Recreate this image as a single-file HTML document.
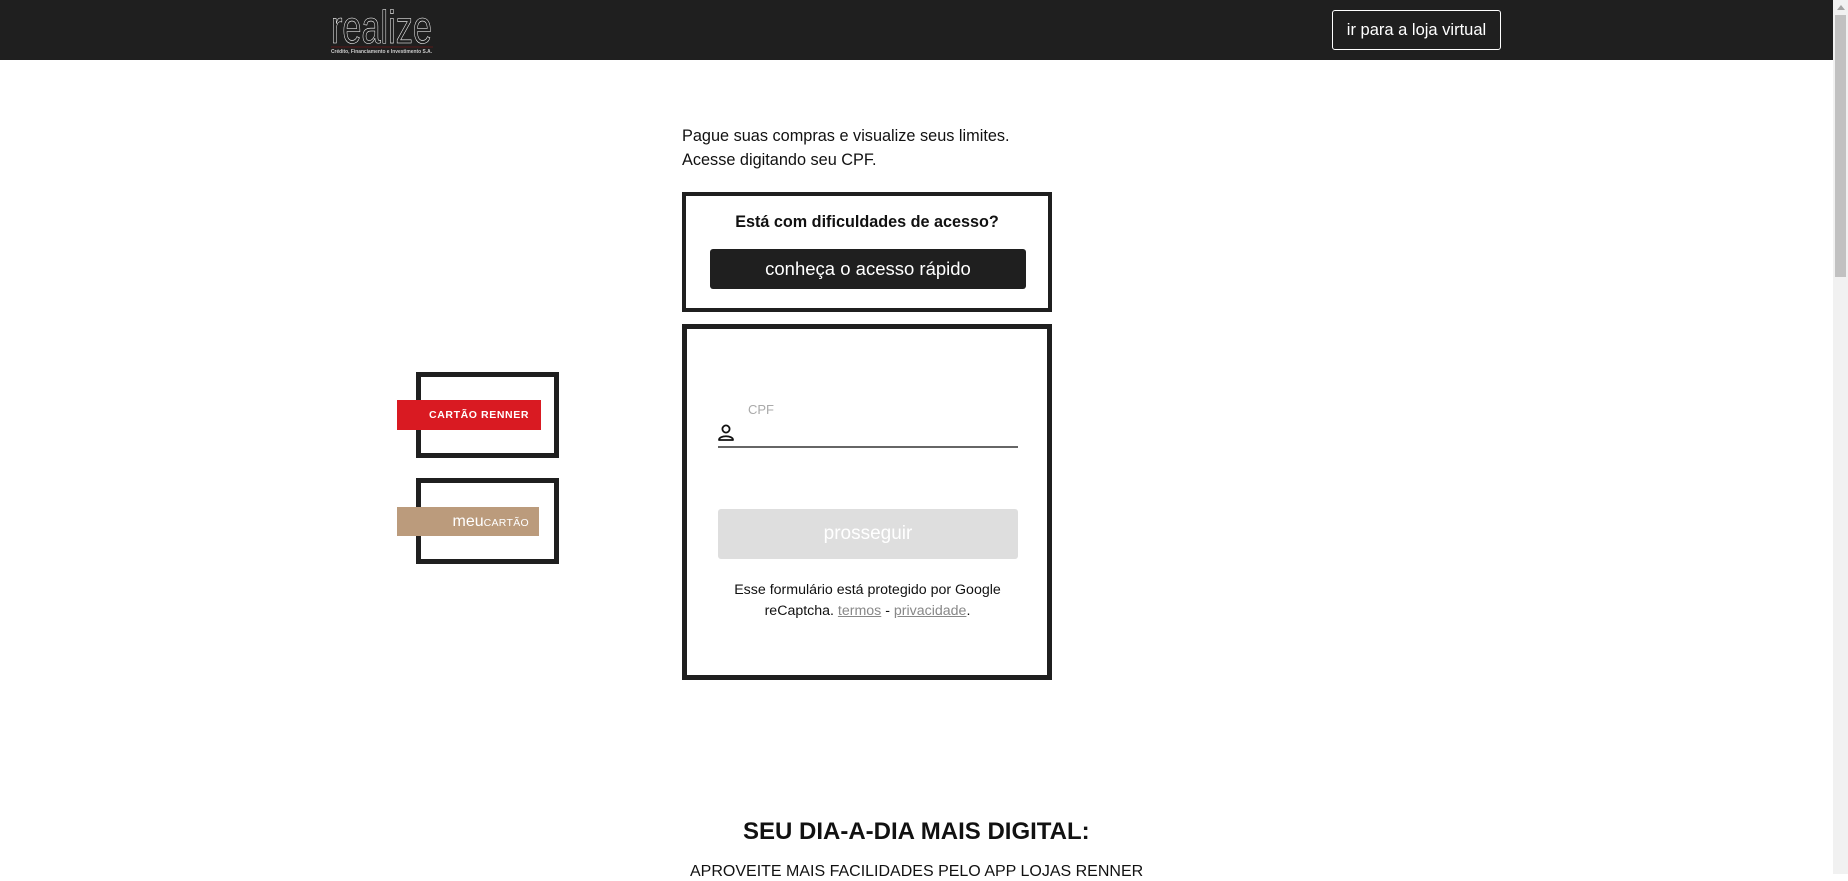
<!DOCTYPE html>
<html><head><meta charset="utf-8"><style>
*{margin:0;padding:0;box-sizing:border-box}
html,body{width:1848px;height:874px;overflow:hidden;background:#fff;font-family:"Liberation Sans",sans-serif;color:#111}
.abs{position:absolute}
#hdr{left:0;top:0;width:1833px;height:60px;background:#1f1f1f}
#scroll{left:1833px;top:0;width:15px;height:874px;background:#f1f1f1}
#thumb{left:1835px;top:15px;width:11px;height:262px;background:#c1c1c1}
.btnloja{left:1332px;top:10px;width:169px;height:40px;border:1px solid #fff;border-radius:3px;color:#fff;font-size:16.5px;text-align:center;line-height:38px}
.intro{left:682px;top:124px;font-size:16.3px;line-height:24px;color:#111}
.box1{left:682px;top:192px;width:370px;height:120px;border:4px solid #1f1f1f}
.box2{left:682px;top:324px;width:370px;height:356px;border:5px solid #1f1f1f}
.card{width:143px;height:86px;border:5px solid #1f1f1f}
</style></head><body>
<div id="hdr" class="abs"></div>
<svg class="abs" style="left:325px;top:0" width="120" height="60">
<text x="6" y="43" font-family="Liberation Sans" font-size="46" fill="none" stroke="#fff" stroke-width="0.6" textLength="101" lengthAdjust="spacingAndGlyphs">realize</text>
<line x1="6" y1="47" x2="108" y2="47" stroke="#5a1a1a" stroke-width="1"/>
<text x="6" y="53" font-family="Liberation Sans" font-size="5" font-weight="bold" fill="#ccc" textLength="101" lengthAdjust="spacingAndGlyphs">Crédito, Financiamento e Investimento S.A.</text>
</svg>
<div class="abs btnloja">ir para a loja virtual</div>
<div id="scroll" class="abs"></div><div id="thumb" class="abs"></div>
<div class="abs" style="left:1837px;top:5px;width:0;height:0;border-left:4px solid transparent;border-right:4px solid transparent;border-bottom:5px solid #a3a3a3"></div>

<div class="abs intro">Pague suas compras e visualize seus limites.<br>Acesse digitando seu CPF.</div>

<div class="abs box1"></div>
<div class="abs" style="left:682px;top:213px;width:370px;text-align:center;font-weight:bold;font-size:16.2px">Está com dificuldades de acesso?</div>
<div class="abs" style="left:710px;top:249px;width:316px;height:40px;background:#1f1f1f;border-radius:3px;color:#fff;font-size:18.5px;text-align:center;line-height:39px">conheça o acesso rápido</div>

<div class="abs box2"></div>
<div class="abs" style="left:748px;top:402px;font-size:13px;color:#aaa">CPF</div>
<svg class="abs" style="left:717px;top:423px" width="18" height="20" viewBox="0 0 18 20"><circle cx="9" cy="6" r="3.6" fill="none" stroke="#111" stroke-width="1.8"/><path d="M2 17 C2 12 16 12 16 17 Z" fill="none" stroke="#111" stroke-width="1.8" stroke-linejoin="round"/></svg>
<div class="abs" style="left:718px;top:446px;width:300px;height:1.5px;background:#666"></div>
<div class="abs" style="left:718px;top:509px;width:300px;height:50px;background:#dedede;border-radius:3px;color:#fff;font-size:19px;text-align:center;line-height:50px">prosseguir</div>
<div class="abs" style="left:690px;top:580px;width:355px;text-align:center;font-size:14.2px;line-height:21px">Esse formulário está protegido por Google<br>reCaptcha. <span style="color:#888;text-decoration:underline">termos</span> - <span style="color:#888;text-decoration:underline">privacidade</span>.</div>

<div class="abs card" style="left:416px;top:372px"></div>
<div class="abs" style="left:397px;top:400px;width:144px;height:30px;background:#d91a22;color:#fff;font-weight:bold;font-size:10.5px;letter-spacing:0.6px;text-align:right;padding-right:12px;line-height:30px">CARTÃO RENNER</div>
<div class="abs card" style="left:416px;top:478px"></div>
<div class="abs" style="left:397px;top:507px;width:142px;height:29px;background:#bb9b7c;color:#fff;text-align:right;padding-right:10px;line-height:29px;font-size:16px">meu<span style="font-size:10.5px;letter-spacing:0.3px">CARTÃO</span></div>

<div class="abs" style="left:743px;top:818px;font-weight:bold;font-size:24px">SEU DIA-A-DIA MAIS DIGITAL:</div>
<div class="abs" style="left:690px;top:863px;font-size:16px">APROVEITE MAIS FACILIDADES PELO APP LOJAS RENNER</div>
</body></html>
